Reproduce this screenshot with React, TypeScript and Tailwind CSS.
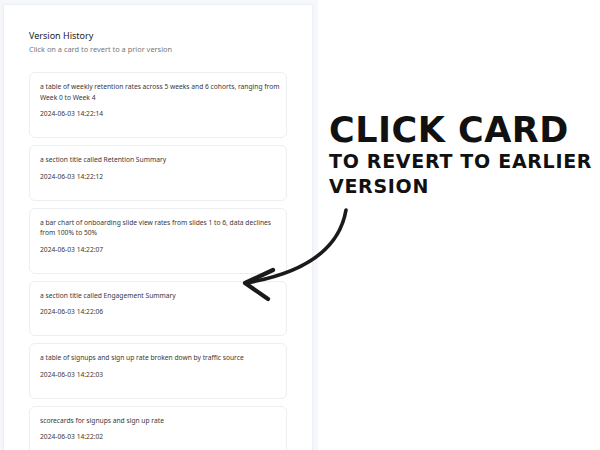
const versions = [
  {
    text: 'a table of weekly retention rates across 5 weeks and 6 cohorts, ranging from\nWeek 0 to Week 4',
    date: '2024-06-03 14:22:14',
  },
  { text: 'a section title called Retention Summary', date: '2024-06-03 14:22:12' },
  {
    text: 'a bar chart of onboarding slide view rates from slides 1 to 6, data declines\nfrom 100% to 50%',
    date: '2024-06-03 14:22:07',
  },
  { text: 'a section title called Engagement Summary', date: '2024-06-03 14:22:06' },
  { text: 'a table of signups and sign up rate broken down by traffic source', date: '2024-06-03 14:22:03' },
  { text: 'scorecards for signups and sign up rate', date: '2024-06-03 14:22:02' },
]

function VersionCard({ text, date }: { text: string; date: string }) {
  return (
    <div className="rounded-md border border-[#eceef2] bg-white pl-[10px] pr-[5px] pt-[9px] pb-[18px]">
      <p className="whitespace-pre-line text-[6.7px] leading-[10.5px] text-[#383838]">{text}</p>
      <p className="mt-[6px] text-[6.7px] leading-[10px] text-[#383838]">{date}</p>
    </div>
  )
}

export default function App() {
  return (
    <div className="relative h-[450px] w-[600px] overflow-hidden bg-white font-['Noto_Sans',sans-serif]">
      <div className="flex h-full w-[318px] bg-[#f5f7fb] pl-[4px] pt-[5px] pr-[6px]">
        {/* Panel */}
        <div className="h-[460px] w-[308px] bg-white px-[25px] pt-[24px] shadow-[0_0_2px_rgba(200,210,225,0.6)]">
          <h2 className="text-[9px] leading-[13px] text-[#222]">Version History</h2>
          <p className="mt-[1px] text-[7.4px] leading-[12px] text-[#777]">Click on a card to revert to a prior version</p>
          <div className="mt-[17px] flex flex-col gap-[7px]">
            {versions.map((v) => (
              <VersionCard key={v.date} text={v.text} date={v.date} />
            ))}
          </div>
        </div>
      </div>

      {/* Annotation */}
      <div className="absolute left-[329px] top-[112px] font-['DejaVu_Sans',sans-serif] font-bold text-[#111]">
        <div className="text-[35px] leading-[37px] tracking-[0.5px]">CLICK CARD</div>
        <div className="text-[19px] leading-[25px] tracking-[0.7px]">TO REVERT TO EARLIER</div>
        <div className="text-[19px] leading-[25px] tracking-[0.7px]">VERSION</div>
      </div>

      <svg className="absolute left-0 top-0" width="600" height="450" viewBox="0 0 600 450">
        <path
          d="M346 210 C 340 245, 310 272, 246 283"
          fill="none"
          stroke="#1a1a1a"
          strokeWidth="3.6"
          strokeLinecap="round"
        />
        <path
          d="M273 270 L 245 283 L 268 299"
          fill="none"
          stroke="#1a1a1a"
          strokeWidth="4.2"
          strokeLinecap="round"
          strokeLinejoin="round"
        />
      </svg>
    </div>
  )
}
